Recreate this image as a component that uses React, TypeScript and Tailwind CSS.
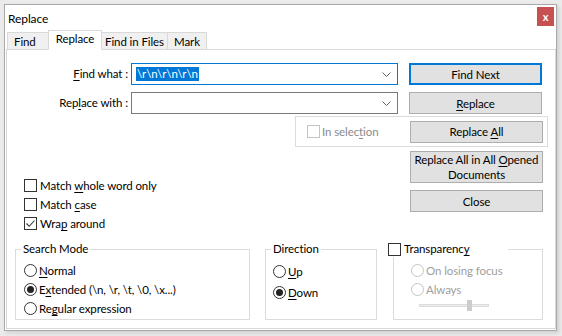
import React from "react";

const font = { fontFamily: "Lato, 'Noto Sans', sans-serif" };

// "&" marks the accelerator letter, drawn underlined
const Accel = ({ text }: { text: string }) => {
  const i = text.indexOf("&");
  if (i < 0) return <>{text}</>;
  return (
    <>
      {text.slice(0, i)}
      <u className="underline-offset-2">{text[i + 1]}</u>
      {text.slice(i + 2)}
    </>
  );
};

const CheckBox = ({ checked = false, disabled = false }: { checked?: boolean; disabled?: boolean }) => (
  <span
    className={`flex h-[13px] w-[13px] shrink-0 items-center justify-center border bg-white ${
      disabled ? "border-[#c4c4c4]" : "border-[#333333]"
    }`}
  >
    {checked && (
      <svg width="11" height="11" viewBox="0 0 11 11">
        <path d="M1.5 5.5 L4.2 8.3 L9.5 2.5" fill="none" stroke="#333" strokeWidth="1.1" />
      </svg>
    )}
  </span>
);

const Radio = ({ checked = false, disabled = false }: { checked?: boolean; disabled?: boolean }) => (
  <span
    className={`flex h-[13px] w-[13px] shrink-0 items-center justify-center rounded-full border bg-white ${
      disabled ? "border-[#c4c4c4]" : "border-[#333333]"
    }`}
  >
    {checked && <span className="h-[7px] w-[7px] rounded-full bg-[#222]" />}
  </span>
);

const Button = ({ label, primary = false, tall = false }: { label: React.ReactNode; primary?: boolean; tall?: boolean }) => (
  <div
    className={`flex w-[133px] items-center justify-center bg-[#e1e1e1] text-center leading-[15px] ${
      tall ? "h-[32px]" : "h-[22px]"
    } ${primary ? "border-2 border-[#0078d7]" : "border border-[#adadad]"}`}
  >
    <span className="whitespace-nowrap">{label}</span>
  </div>
);

const Chevron = () => (
  <svg width="9" height="5" viewBox="0 0 9 5" className="ml-auto mr-[6px]">
    <path d="M0.5 0.5 L4.5 4.5 L8.5 0.5" fill="none" stroke="#606060" strokeWidth="1" />
  </svg>
);

const tabs = [
  { name: "Find", w: "w-[42px] pl-[6px]" },
  { name: "Replace", w: "w-[54px] justify-center", active: true },
  { name: "Find in Files", w: "w-[67px] justify-center" },
  { name: "Mark", w: "w-[40px] justify-center" },
];

export default function App() {
  return (
    <div className="h-[336px] w-[562px] bg-[#ebebeb] pl-[4px] pt-[4px] text-[11.5px] tracking-[-0.1px] text-black" style={font}>
      <div className="flex h-[327px] w-[553px] flex-col border border-[#a9a9a9] bg-white shadow-[2px_2px_4px_rgba(0,0,0,0.12)]">
        {/* title bar */}
        <div className="flex h-[25px] items-start">
          <span className="mt-[5px] pl-[3px] text-[12px]">Replace</span>
          <div className="ml-auto mr-[2px] mt-[2px] flex h-[19px] w-[17px] items-center justify-center bg-[#c75050] text-[11px] font-bold leading-none text-white">
            x
          </div>
        </div>

        {/* tabs */}
        <div className="relative z-10 flex h-[19px] items-end pl-[2px]">
          {tabs.map((t, i) => (
            <div
              key={t.name}
              className={`flex items-center ${t.w} ${i > 0 ? "-ml-px" : ""} border border-[#d9d9d9] ${
                t.active ? "z-10 -mb-px h-[20px] border-b-white bg-white pb-[2px]" : "h-[17px] border-b-0 bg-[#f0f0f0] pt-[1px]"
              }`}
            >
              {t.name}
            </div>
          ))}
        </div>

        {/* tab panel */}
        <div className="mb-[1px] ml-[1px] flex flex-1 flex-col border border-[#d9d9d9] pt-[13px]">
          <div className="flex h-[22px] items-center">
            <span className="w-[121px] text-right">
              <Accel text="&Find what :" />
            </span>
            <div className="ml-[3px] flex h-[22px] w-[267px] items-center border border-[#0078d7]">
              <span className="ml-[4px] bg-[#0078d7] px-[1px] leading-[14px] text-white">{"\\r\\n\\r\\n\\r\\n"}</span>
              <Chevron />
            </div>
            <div className="ml-[11px]">
              <Button label="Find Next" primary />
            </div>
          </div>

          <div className="mt-[7px] flex h-[22px] items-center">
            <span className="w-[121px] text-right">
              <Accel text="Rep&lace with :" />
            </span>
            <div className="ml-[3px] flex h-[22px] w-[267px] items-center border border-[#7a7a7a]">
              <Chevron />
            </div>
            <div className="ml-[11px]">
              <Button label={<Accel text="&Replace" />} />
            </div>
          </div>

          <div className="ml-[288px] mt-[2px] flex h-[31px] w-[253px] items-center border border-[#dcdcdc] pl-[11px] pr-[4px]">
            <CheckBox disabled />
            <span className="ml-[2px] text-[#8a8a8a]">
              <Accel text="In selec&tion" />
            </span>
            <div className="ml-auto">
              <Button label={<Accel text="Replace &All" />} />
            </div>
          </div>

          <div className="flex h-[86px] justify-between pl-[17px] pr-[12px]">
            <div className="mt-[29px] flex flex-col">
              {[
                { t: "Match &whole word only" },
                { t: "Match &case" },
                { t: "Wra&p around", c: true },
              ].map((o) => (
                <div key={o.t} className="flex h-[19px] items-center gap-[3px]">
                  <CheckBox checked={o.c} />
                  <span>
                    <Accel text={o.t} />
                  </span>
                </div>
              ))}
            </div>
            <div className="flex flex-col pt-[4px]">
              <Button
                tall
                label={
                  <>
                    Replace All in All <Accel text="&Opened" />
                    <br />
                    Documents
                  </>
                }
              />
              <div className="mt-[7px]">
                <Button label="Close" />
              </div>
            </div>
          </div>

          <div className="mt-[8px] flex pl-[8px]">
            <fieldset className="h-[79px] w-[235px] border border-[#dcdcdc]">
              <legend className="ml-[5px] px-[2px] leading-[16px]">Search Mode</legend>
              <div className="flex flex-col pl-[8px] pt-[4px]">
                {[
                  { t: "&Normal" },
                  { t: "E&xtended (\\n, \\r, \\t, \\0, \\x...)", c: true },
                  { t: "Re&gular expression" },
                ].map((o) => (
                  <div key={o.t} className="flex h-[19px] items-center gap-[2px]">
                    <Radio checked={o.c} />
                    <span>
                      <Accel text={o.t} />
                    </span>
                  </div>
                ))}
              </div>
            </fieldset>

            <fieldset className="ml-[15px] h-[79px] w-[112px] border border-[#dcdcdc]">
              <legend className="ml-[5px] px-[2px] leading-[16px]">Direction</legend>
              <div className="flex flex-col pl-[7px] pt-[4px]">
                {[{ t: "&Up" }, { t: "&Down", c: true }].map((o) => (
                  <div key={o.t} className="flex h-[21px] items-center gap-[2px]">
                    <Radio checked={o.c} />
                    <span>
                      <Accel text={o.t} />
                    </span>
                  </div>
                ))}
              </div>
            </fieldset>

            <fieldset className="ml-[16px] h-[79px] w-[150px] border border-[#dcdcdc]">
              <legend className="-ml-[6px] flex w-[120px] items-center gap-[3px] leading-[16px]">
                <CheckBox />
                <span>
                  <Accel text="Transparenc&y" />
                </span>
              </legend>
              <div className="flex flex-col pl-[17px] pt-[4px] text-[#a0a0a0]">
                {["On losing focus", "Always"].map((t) => (
                  <div key={t} className="flex h-[19px] items-center gap-[2px]">
                    <Radio disabled />
                    <span>{t}</span>
                  </div>
                ))}
                <div className="relative ml-[8px] mt-[1px] flex h-[11px] w-[70px] items-center">
                  <div className="h-[3px] w-full border border-[#dcdcdc] bg-[#ececec]" />
                  <div className="absolute left-[48px] top-0 h-[11px] w-[5px] bg-[#cdcdcd]" />
                </div>
              </div>
            </fieldset>
          </div>
        </div>
      </div>
    </div>
  );
}
